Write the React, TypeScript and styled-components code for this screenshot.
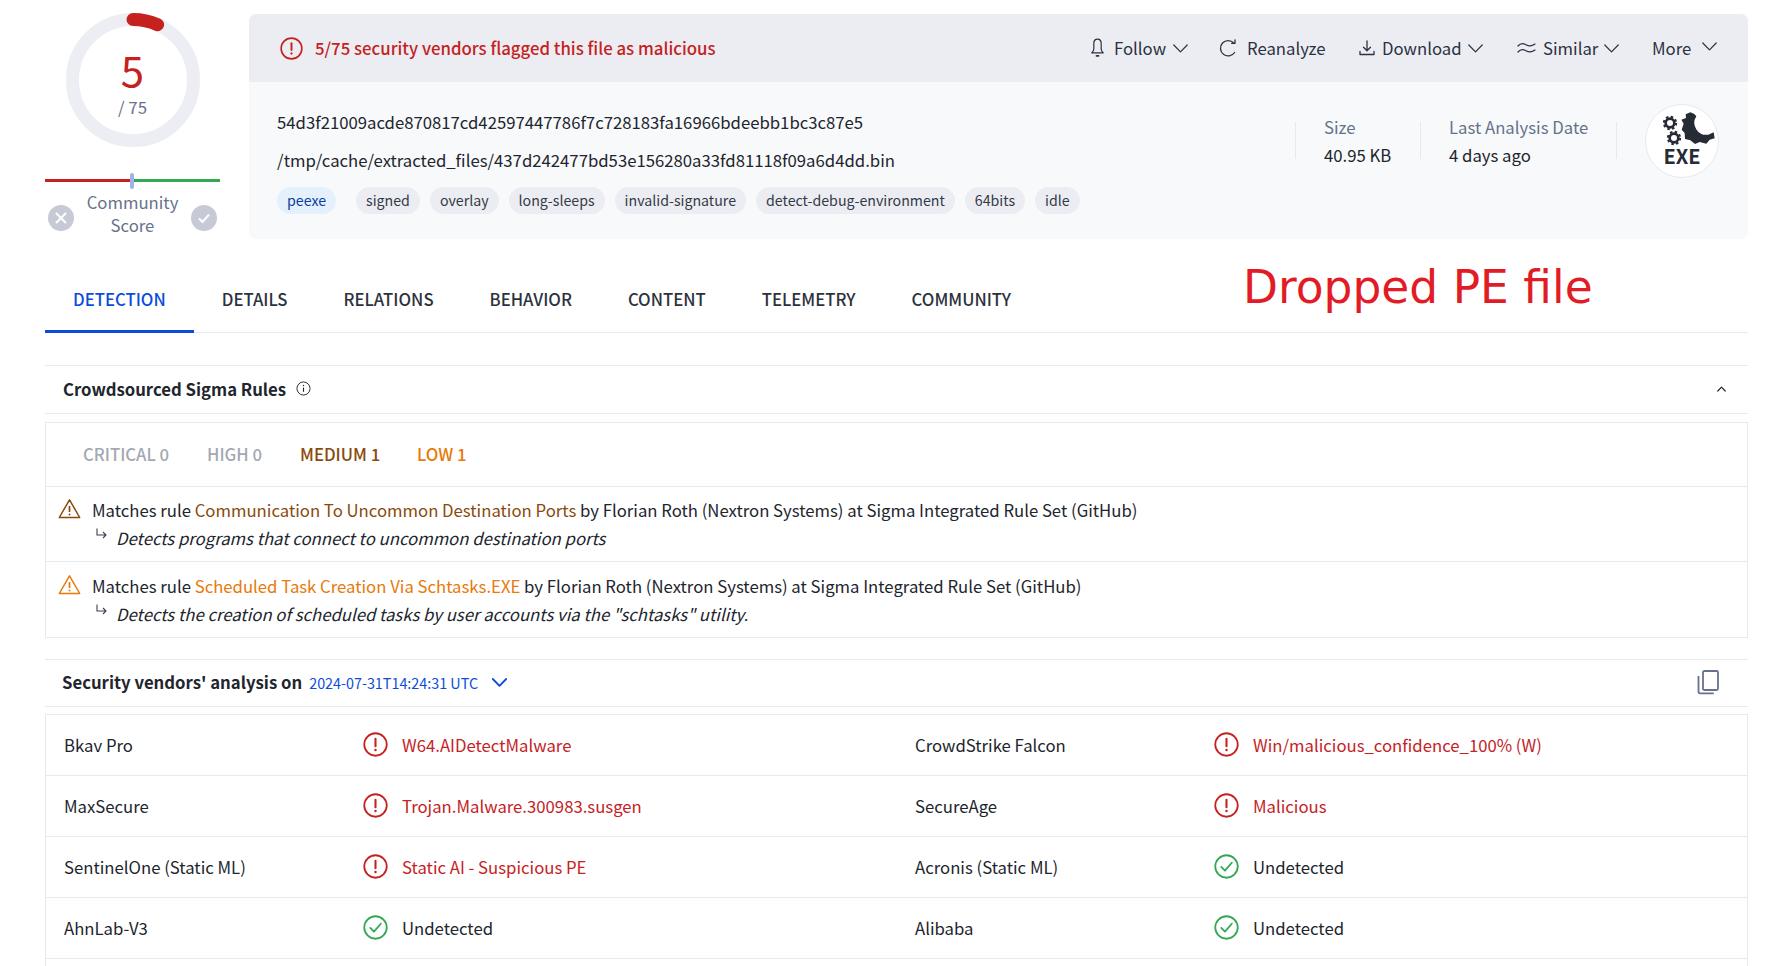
import React from 'react'
import styled, { createGlobalStyle } from 'styled-components'

const RED = '#c5221f'
const BLUE = '#0b4dda'
const INK = '#21252d'
const MUTED = '#66728a'
const LINE = '#e6e9f0'
const GREEN = '#33a852'
const MEDIUM = '#8a4a0c'
const LOW = '#e67a0a'

const GlobalStyle = createGlobalStyle`
  html, body {
    margin: 0;
    background: #fff;
    color: ${INK};
    font-family: "Noto Sans CJK SC", "Noto Sans", sans-serif;
    font-size: 16.73px;
  }
  * { box-sizing: border-box; }
`

const Page = styled.div`
  width: 1768px;
  height: 966px;
  overflow: hidden;
  padding: 0 20px 0 45px;
`

const Top = styled.div`
  display: flex;
  padding-top: 14px;
`

const ScoreColumn = styled.div`
  width: 175px;
  margin: -1px 29px 0 0;
  flex: none;
  display: flex;
  flex-direction: column;
  align-items: center;
`

const Ring = styled.div`
  position: relative;
  width: 134px;
  height: 134px;
  margin-bottom: 32px;
`

const RingLabel = styled.div`
  position: absolute;
  inset: 0;
  padding-top: 36px;
  display: flex;
  flex-direction: column;
  align-items: center;
`

const ScoreValue = styled.div`
  color: ${RED};
  font-size: 42px;
  line-height: 40px;
`

const ScoreTotal = styled.div`
  color: ${MUTED};
  font-size: 16.8px;
  line-height: 24px;
  margin-top: 6px;
`

const CommunityBar = styled.div`
  position: relative;
  width: 175px;
  height: 3px;
  background: linear-gradient(to right, ${RED} 50%, ${GREEN} 50%);
`

const BarMarker = styled.span`
  position: absolute;
  left: 85px;
  top: -6px;
  width: 4px;
  height: 16px;
  border-radius: 2px;
  background: #9fb3e8;
`

const CommunityRow = styled.div`
  width: 175px;
  display: flex;
  align-items: center;
  justify-content: space-between;
  padding: 0 3px;
  margin-top: 9px;
`

const CommunityLabel = styled.div`
  color: ${MUTED};
  line-height: 23px;
  text-align: center;
`

const VoteDot = styled.span`
  width: 26px;
  height: 26px;
  border-radius: 50%;
  background: #c6cad4;
  display: flex;
  align-items: center;
  justify-content: center;
  margin-top: 7px;
`

const Card = styled.div`
  flex: 1;
  height: 225px;
  border-radius: 7px;
  background: #f8f9fb;
  overflow: hidden;
`

const CardHeader = styled.div`
  height: 68px;
  background: #ecedf2;
  display: flex;
  align-items: center;
  padding-left: 31px;
`

const Verdict = styled.div`
  display: flex;
  align-items: center;
  gap: 12px;
  color: ${RED};
  font-weight: 500;
  font-size: 16.8px;
  flex: 1;
`

const Action = styled.div<{ $w: number; $gap?: number }>`
  display: flex;
  align-items: center;
  width: ${(p) => p.$w}px;
  gap: ${(p) => p.$gap ?? 6}px;
  color: #2a3142;
  white-space: nowrap;
`

const RaisedIcon = styled.span`
  display: flex;
  margin-top: -3px;
`

const CardBody = styled.div`
  display: flex;
`

const FileInfo = styled.div`
  flex: 1;
  padding: 21px 0 0 28px;
`

const FileLine = styled.div`
  line-height: 38px;
  height: 38px;
`

const Tags = styled.div`
  display: flex;
  gap: 10px;
  margin-top: 8px;
`

const Tag = styled.span<{ $blue?: boolean }>`
  height: 27px;
  line-height: 27px;
  padding: 0 10px;
  border-radius: 14px;
  font-size: 14.2px;
  color: ${(p) => (p.$blue ? '#0b3e9e' : '#333a47')};
  background: ${(p) => (p.$blue ? '#e4f1fd' : '#ecedf2')};
  margin-right: ${(p) => (p.$blue ? 10 : 0)}px;
`

const Stats = styled.div`
  display: flex;
  align-items: flex-start;
  padding-top: 40px;
  margin-right: 29px;
`

const Stat = styled.div<{ $w: number }>`
  width: ${(p) => p.$w}px;
  height: 37px;
  padding-left: 28px;
  border-left: 1px solid ${LINE};
  white-space: nowrap;
`

const StatLabel = styled.div`
  color: ${MUTED};
  line-height: 18px;
  margin-top: -4px;
`

const StatValue = styled.div`
  line-height: 18px;
  margin-top: 10px;
`

const StatEnd = styled.div`
  width: 29px;
  height: 37px;
  border-left: 1px solid ${LINE};
`

const ExeBadge = styled.div`
  width: 74px;
  height: 74px;
  margin-top: -18px;
  border-radius: 50%;
  background: #fff;
  border: 1px solid ${LINE};
  display: flex;
  flex-direction: column;
  align-items: center;
  padding-top: 4px;
`

const ExeText = styled.div`
  font-weight: 700;
  font-size: 20px;
  line-height: 20px;
  margin-top: -3px;
  color: #262b36;
`

const TabRow = styled.div`
  position: relative;
  display: flex;
  height: 67px;
  margin-top: 27px;
  border-bottom: 1px solid ${LINE};
`

const Tab = styled.div<{ $active?: boolean }>`
  padding: 0 28px;
  height: 67px;
  line-height: 67px;
  font-weight: 500;
  color: ${(p) => (p.$active ? BLUE : '#2c323d')};
  border-bottom: 3px solid ${(p) => (p.$active ? BLUE : 'transparent')};
`

const Annotation = styled.div`
  position: absolute;
  left: 1198px;
  top: -6px;
  color: #e21c26;
  font-family: "DejaVu Sans", sans-serif;
  font-size: 45.5px;
  line-height: 56px;
  white-space: nowrap;
`

const SectionHeader = styled.div<{ $top: number }>`
  display: flex;
  align-items: center;
  height: 49px;
  margin-top: ${(p) => p.$top}px;
  padding: 0 18px 2px;
  border-top: 1px solid ${LINE};
  border-bottom: 1px solid ${LINE};
`

const VendorsHeader = styled(SectionHeader)`
  height: 48px;
`

const SectionTitle = styled.div`
  font-weight: 700;
`

const VendorsTitle = styled(SectionTitle)`
  margin-left: -1px;
`

const InfoSlot = styled.span`
  display: flex;
  margin-left: 10px;
`

const CollapseSlot = styled.span`
  display: flex;
  margin: 0 4px 0 auto;
`

const RunDate = styled.span`
  color: ${BLUE};
  font-size: 14.35px;
  margin-left: 7px;
`

const DateChevron = styled.span`
  display: flex;
  margin-left: 14px;
`

const CopySlot = styled.span`
  display: flex;
  margin: 0 11px 0 auto;
`

const Box = styled.div<{ $top: number; $open?: boolean }>`
  margin-top: ${(p) => p.$top}px;
  border: 1px solid ${LINE};
  border-bottom: ${(p) => (p.$open ? 'none' : `1px solid ${LINE}`)};
`

const FilterRow = styled.div`
  display: flex;
  align-items: center;
  height: 64px;
  padding: 0 0 2px 37px;
  border-bottom: 1px solid ${LINE};
`

const Filter = styled.span<{ $color: string; $w: number }>`
  width: ${(p) => p.$w}px;
  color: ${(p) => p.$color};
  font-weight: 500;
`

const RuleRow = styled.div<{ $last?: boolean }>`
  display: grid;
  grid-template-columns: 46px 1fr;
  height: 75px;
  padding-top: ${(p) => (p.$last ? 11 : 10)}px;
  border-bottom: ${(p) => (p.$last ? 'none' : `1px solid ${LINE}`)};
`

const RuleIcon = styled.div`
  display: flex;
  justify-content: flex-end;
  padding: 1px 11px 0 0;
`

const RuleText = styled.div`
  line-height: 26px;
`

const RuleLink = styled.span<{ $color: string }>`
  color: ${(p) => p.$color};
`

const RuleDesc = styled.div`
  display: flex;
  gap: 8px;
  padding-left: 3px;
  margin-top: 2px;
  font-style: italic;

  svg {
    margin-top: 3px;
  }
`

const VendorRow = styled.div`
  display: grid;
  grid-template-columns: 851px 1fr;
  height: 61px;
  border-bottom: 1px solid ${LINE};
`

const VendorCell = styled.div`
  display: flex;
  align-items: center;
  padding: 0 0 1px 18px;
`

const VendorName = styled.div`
  width: 299px;
`

const Result = styled.div<{ $bad?: boolean }>`
  display: flex;
  align-items: center;
  gap: 14px;
  color: ${(p) => (p.$bad ? RED : INK)};
`

const AlertIcon = ({ size, color = RED }: { size: number; color?: string }) => (
  <svg width={size} height={size} viewBox="0 0 24 24" fill="none" stroke={color} strokeWidth="1.7">
    <circle cx="12" cy="12" r="10.8" />
    <path d="M12 6.4v7.2" strokeWidth="2" strokeLinecap="round" />
    <circle cx="12" cy="17.2" r="1.2" fill={color} stroke="none" />
  </svg>
)

const CheckIcon = ({ size }: { size: number }) => (
  <svg width={size} height={size} viewBox="0 0 24 24" fill="none" stroke={GREEN} strokeWidth="1.7">
    <circle cx="12" cy="12" r="10.8" />
    <path d="M7 12.4l3.5 3.6 6.6-7.6" strokeLinecap="round" strokeLinejoin="round" />
  </svg>
)

const Chevron = ({ color = '#2a3142', weight = 1.2 }: { color?: string; weight?: number }) => (
  <svg width="15" height="9" viewBox="0 0 15 9" fill="none" stroke={color} strokeWidth={weight}>
    <path d="M.8 1l6.700 6.800L14.200 1" strokeLinecap="round" strokeLinejoin="round" />
  </svg>
)

const ChevronUp = () => (
  <svg width="9" height="6" viewBox="0 0 9 6" fill="none" stroke={INK} strokeWidth="1.2">
    <path d="M.8 5l3.700-3.800L8.200 5" strokeLinecap="round" strokeLinejoin="round" />
  </svg>
)

const BellIcon = () => (
  <svg width="19" height="20" viewBox="0 0 19 20" fill="none" stroke="#2a3142" strokeWidth="1.2">
    <path d="M9.500 1.200c-2.300 0-3.700 1.800-3.700 4.300v5.800c0 1.500-.8 2.600-2 3.500h11.400c-1.200-.9-2-2-2-3.500V5.500c0-2.500-1.400-4.300-3.700-4.300z" strokeLinejoin="round" />
    <path d="M8.500 17.800h2" strokeWidth="1.800" strokeLinecap="round" />
  </svg>
)

const ReloadIcon = () => (
  <svg width="18" height="20" viewBox="0 0 18 20" fill="none" stroke="#2a3142" strokeWidth="1.300">
    <path d="M15.600 14.500A7.700 7.700 0 1 1 14.800 5" strokeLinecap="round" />
    <path d="M16 1.800v3.500h-3.400" strokeLinecap="round" strokeLinejoin="round" />
  </svg>
)

const DownloadIcon = () => (
  <svg width="18" height="18" viewBox="0 0 18 18" fill="none" stroke="#2a3142" strokeWidth="1.300">
    <path d="M9 2v9.500M5.500 8.300L9 11.800l3.500-3.500" strokeLinecap="round" strokeLinejoin="round" />
    <path d="M2 12.500v3h14v-3" strokeLinecap="round" strokeLinejoin="round" />
  </svg>
)

const SimilarIcon = () => (
  <svg width="20" height="14" viewBox="0 0 20 14" fill="none" stroke="#2a3142" strokeWidth="1.200">
    <path d="M1 5c2.500-3 5-3 8-1.200s5.500 1.800 9-.8M1 11c2.500-3 5-3 8-1.200s5.500 1.800 9-.8" strokeLinecap="round" />
  </svg>
)

const InfoIcon = () => (
  <svg width="15" height="15" viewBox="0 0 16 16" fill="none" stroke={INK} strokeWidth="1">
    <circle cx="8" cy="8" r="7" />
    <path d="M8 7v4.500" strokeWidth="1.200" />
    <circle cx="8" cy="4.800" r="0.800" fill={INK} stroke="none" />
  </svg>
)

const WarnIcon = ({ color }: { color: string }) => (
  <svg width="23" height="21" viewBox="0 0 23 21" fill="none" stroke={color} strokeWidth="1.500">
    <path d="M11.500 1.800L1.300 19.500h20.400z" strokeLinejoin="round" />
    <path d="M11.500 8v6" strokeWidth="1.700" />
    <circle cx="11.500" cy="16.600" r="1" fill={color} stroke="none" />
  </svg>
)

const ReplyArrow = () => (
  <svg width="13" height="13" viewBox="0 0 13 13" fill="none" stroke="#3a4150" strokeWidth="1.100">
    <path d="M2 0.500v6.500h9M8 4l3 3-3 3" />
  </svg>
)

const CopyIcon = () => (
  <svg width="22" height="25" viewBox="0 0 22 25" fill="none" stroke={MUTED} strokeWidth="1.800">
    <rect x="6" y="1" width="15" height="19" rx="1.500" />
    <path d="M1.500 6v15.500c0 1 .6 1.800 1.800 1.800h13.500" />
  </svg>
)

const SmallGear = ({ cx, cy }: { cx: number; cy: number }) => (
  <g fill="none" stroke="#262b36">
    <circle cx={cx} cy={cy} r="13" strokeWidth="8" />
    <circle cx={cx} cy={cy} r="18.500" strokeWidth="6" strokeDasharray="7.500 7" />
  </g>
)

const ExeGears = () => (
  <svg width="72" height="40" viewBox="81 58 216 120">
    <SmallGear cx={153} cy={100} />
    <SmallGear cx={165} cy={145} />
    <path
      fill="#262b36"
      d="M200 74L214 68 226 73 232 80A36 36 0 0 0 268 135L284 128 287 146 272 150 262 162 242 157 228 163 214 152 198 148 197 130 188 120 194 102 187 90 201 85z"
    />
  </svg>
)

const rules = [
  {
    color: MEDIUM,
    name: 'Communication To Uncommon Destination Ports',
    desc: 'Detects programs that connect to uncommon destination ports',
  },
  {
    color: LOW,
    name: 'Scheduled Task Creation Via Schtasks.EXE',
    desc: 'Detects the creation of scheduled tasks by user accounts via the "schtasks" utility.',
  },
]

const vendors: [string, string, boolean, string, string, boolean][] = [
  ['Bkav Pro', 'W64.AIDetectMalware', true, 'CrowdStrike Falcon', 'Win/malicious_confidence_100% (W)', true],
  ['MaxSecure', 'Trojan.Malware.300983.susgen', true, 'SecureAge', 'Malicious', true],
  ['SentinelOne (Static ML)', 'Static AI - Suspicious PE', true, 'Acronis (Static ML)', 'Undetected', false],
  ['AhnLab-V3', 'Undetected', false, 'Alibaba', 'Undetected', false],
]

const tabs = ['DETECTION', 'DETAILS', 'RELATIONS', 'BEHAVIOR', 'CONTENT', 'TELEMETRY', 'COMMUNITY']
const tags = ['signed', 'overlay', 'long-sleeps', 'invalid-signature', 'detect-debug-environment', '64bits', 'idle']

const VendorResult = ({ label, bad }: { label: string; bad: boolean }) => (
  <Result $bad={bad}>
    {bad ? <AlertIcon size={25} /> : <CheckIcon size={25} />}
    {label}
  </Result>
)

export default function App() {
  return (
    <Page>
      <GlobalStyle />
      <Top>
        <ScoreColumn>
          <Ring>
            <svg width="134" height="134" viewBox="0 0 134 134" fill="none">
              <circle cx="67" cy="67" r="60.500" stroke="#eceef3" strokeWidth="13" />
              <path d="M67 6.500A60.500 60.500 0 0 1 91.600 11.700" stroke={RED} strokeWidth="13" strokeLinecap="round" />
            </svg>
            <RingLabel>
              <ScoreValue>5</ScoreValue>
              <ScoreTotal>/ 75</ScoreTotal>
            </RingLabel>
          </Ring>
          <CommunityBar>
            <BarMarker />
          </CommunityBar>
          <CommunityRow>
            <VoteDot>
              <svg width="14" height="14" viewBox="0 0 14 14" stroke="#fff" strokeWidth="2">
                <path d="M2 2l10 10M12 2L2 12" />
              </svg>
            </VoteDot>
            <CommunityLabel>
              Community
              <br />
              Score
            </CommunityLabel>
            <VoteDot>
              <svg width="14" height="14" viewBox="0 0 14 14" fill="none" stroke="#fff" strokeWidth="2">
                <path d="M2 7.500l3.500 3.500L12 3.500" />
              </svg>
            </VoteDot>
          </CommunityRow>
        </ScoreColumn>
        <Card>
          <CardHeader>
            <Verdict>
              <AlertIcon size={23} />
              5/75 security vendors flagged this file as malicious
            </Verdict>
            <Action $w={131} $gap={7}>
              <BellIcon />
              Follow
              <Chevron />
            </Action>
            <Action $w={139} $gap={10}>
              <ReloadIcon />
              Reanalyze
            </Action>
            <Action $w={159}>
              <DownloadIcon />
              Download
              <Chevron />
            </Action>
            <Action $w={135}>
              <SimilarIcon />
              Similar
              <Chevron />
            </Action>
            <Action $w={96} $gap={11}>
              More
              <RaisedIcon>
                <Chevron />
              </RaisedIcon>
            </Action>
          </CardHeader>
          <CardBody>
            <FileInfo>
              <FileLine>54d3f21009acde870817cd42597447786f7c728183fa16966bdeebb1bc3c87e5</FileLine>
              <FileLine>/tmp/cache/extracted_files/437d242477bd53e156280a33fd81118f09a6d4dd.bin</FileLine>
              <Tags>
                <Tag $blue>peexe</Tag>
                {tags.map((t) => (
                  <Tag key={t}>{t}</Tag>
                ))}
              </Tags>
            </FileInfo>
            <Stats>
              <Stat $w={125}>
                <StatLabel>Size</StatLabel>
                <StatValue>40.95 KB</StatValue>
              </Stat>
              <Stat $w={196}>
                <StatLabel>Last Analysis Date</StatLabel>
                <StatValue>4 days ago</StatValue>
              </Stat>
              <StatEnd />
              <ExeBadge>
                <ExeGears />
                <ExeText>EXE</ExeText>
              </ExeBadge>
            </Stats>
          </CardBody>
        </Card>
      </Top>
      <TabRow>
        {tabs.map((t, i) => (
          <Tab key={t} $active={i === 0}>
            {t}
          </Tab>
        ))}
        <Annotation>Dropped PE file</Annotation>
      </TabRow>
      <SectionHeader $top={32}>
        <SectionTitle>Crowdsourced Sigma Rules</SectionTitle>
        <InfoSlot>
          <InfoIcon />
        </InfoSlot>
        <CollapseSlot>
          <ChevronUp />
        </CollapseSlot>
      </SectionHeader>
      <Box $top={8}>
        <FilterRow>
          <Filter $color="#a3a8b3" $w={124}>CRITICAL 0</Filter>
          <Filter $color="#a3a8b3" $w={93}>HIGH 0</Filter>
          <Filter $color={MEDIUM} $w={117}>MEDIUM 1</Filter>
          <Filter $color={LOW} $w={60}>LOW 1</Filter>
        </FilterRow>
        {rules.map((r, i) => (
          <RuleRow key={r.name} $last={i === rules.length - 1}>
            <RuleIcon>
              <WarnIcon color={r.color} />
            </RuleIcon>
            <RuleText>
              Matches rule <RuleLink $color={r.color}>{r.name}</RuleLink> by Florian Roth (Nextron Systems) at Sigma
              Integrated Rule Set (GitHub)
              <RuleDesc>
                <ReplyArrow />
                {r.desc}
              </RuleDesc>
            </RuleText>
          </RuleRow>
        ))}
      </Box>
      <VendorsHeader $top={21}>
        <VendorsTitle>Security vendors' analysis on</VendorsTitle>
        <RunDate>2024-07-31T14:24:31 UTC</RunDate>
        <DateChevron>
          <Chevron color={BLUE} weight={1.8} />
        </DateChevron>
        <CopySlot>
          <CopyIcon />
        </CopySlot>
      </VendorsHeader>
      <Box $top={7} $open>
        {vendors.map((v) => (
          <VendorRow key={v[0]}>
            <VendorCell>
              <VendorName>{v[0]}</VendorName>
              <VendorResult label={v[1]} bad={v[2]} />
            </VendorCell>
            <VendorCell>
              <VendorName>{v[3]}</VendorName>
              <VendorResult label={v[4]} bad={v[5]} />
            </VendorCell>
          </VendorRow>
        ))}
        <VendorRow />
      </Box>
    </Page>
  )
}
